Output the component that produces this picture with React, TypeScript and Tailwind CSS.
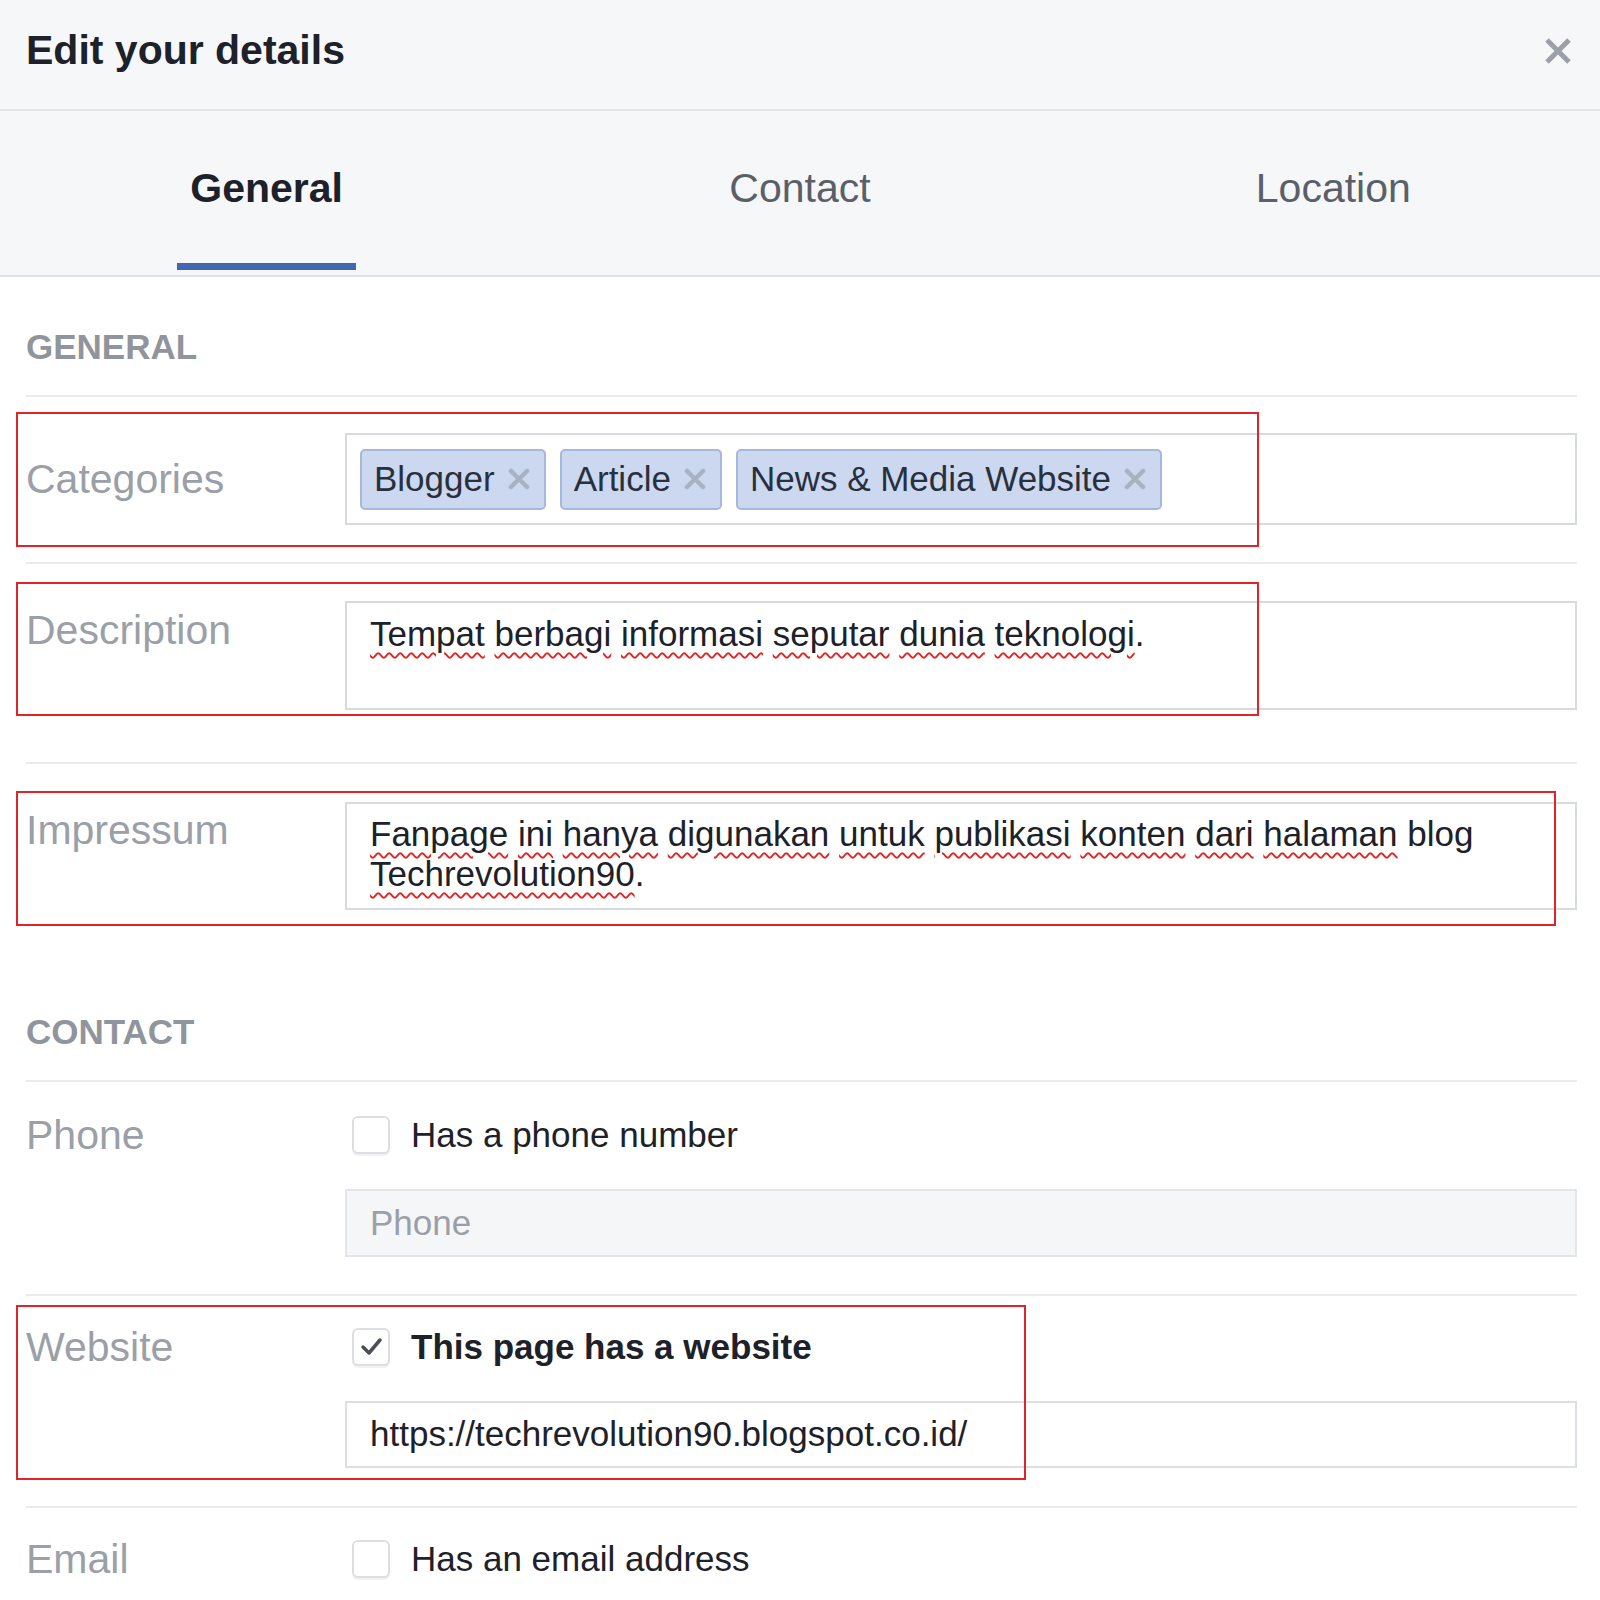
import React from 'react'

const Word = ({ text, bad }: { text: string; bad?: boolean }) =>
  bad ? (
    <span className="underline decoration-wavy decoration-[#e02424] decoration-[1.5px] underline-offset-[6px]">
      {text}
    </span>
  ) : (
    <span>{text}</span>
  )

const Words = ({ items }: { items: [string, boolean][] }) => (
  <>
    {items.map(([w, bad], i) => (
      <React.Fragment key={i}>
        <Word text={w} bad={bad} />
        {i < items.length - 1 ? ' ' : ''}
      </React.Fragment>
    ))}
  </>
)

const Chip = ({ label }: { label: string }) => (
  <div className="flex h-[61px] items-center gap-[13px] rounded-[5px] border-2 border-[#a6b9dc] bg-[#cbd8f0] pl-[12px] pr-[14px] text-[35px] text-[#29303d]">
    <span>{label}</span>
    <svg width="22" height="22" viewBox="0 0 22 22">
      <path d="M3 3 L19 19 M19 3 L3 19" stroke="#a9b2c2" strokeWidth="4.5" strokeLinecap="round" />
    </svg>
  </div>
)

const Checkbox = ({ checked }: { checked?: boolean }) => (
  <div className="ml-[7px] flex h-[38px] w-[38px] items-center justify-center rounded-[6px] border-2 border-[#dcdee3] bg-white shadow-[0_2px_0_rgba(0,0,0,0.05)]">
    {checked && (
      <svg width="26" height="26" viewBox="0 0 26 26">
        <path d="M5 13 L11 19 L22 6" fill="none" stroke="#4b4f56" strokeWidth="3.5" strokeLinecap="round" strokeLinejoin="round" />
      </svg>
    )}
  </div>
)

const RedBox = ({ className }: { className: string }) => (
  <div className={`pointer-events-none absolute border-2 border-[#e0242a] ${className}`} />
)

const Label = ({ text, className }: { text: string; className?: string }) => (
  <div className={`w-[319px] shrink-0 text-[41px] leading-[48px] text-[#9a9fa8] ${className ?? ''}`}>{text}</div>
)

export default function App() {
  return (
    <div className="h-[1600px] w-[1600px] overflow-hidden bg-white font-['Liberation_Sans',Arial,sans-serif]">
      {/* header */}
      <div className="flex h-[111px] items-center justify-between border-b-2 border-[#e3e4e8] bg-[#f6f7f9] pl-[26px] pr-[27px]">
        <h1 className="mb-[8px] text-[41px] font-bold leading-none text-[#1d2129]">Edit your details</h1>
        <svg width="30" height="30" viewBox="0 0 30 30" className="mb-[8px]">
          <path d="M4 4 L26 26 M26 4 L4 26" stroke="#9a9fa8" strokeWidth="5" />
        </svg>
      </div>

      {/* tabs */}
      <div className="flex h-[166px] border-b-2 border-[#dfe1e5] bg-[#f6f7f9]">
        {['General', 'Contact', 'Location'].map((t, i) => (
          <div key={t} className="flex flex-1 flex-col items-center pt-[57px]">
            <div className={`text-[41px] leading-none ${i === 0 ? 'font-bold text-[#1d2129]' : 'text-[#5a5f68]'}`}>{t}</div>
            {i === 0 && <div className="mb-[5px] mt-auto h-[7px] w-[179px] bg-[#4267b2]" />}
          </div>
        ))}
      </div>

      {/* body */}
      <div className="pl-[26px] pr-[23px]">
        <div className="border-b-2 border-[#e9ebee] pb-[31px] pt-[52px] text-[35px] font-bold leading-none text-[#90949c]">GENERAL</div>

        {/* categories */}
        <div className="relative flex items-center border-b-2 border-[#e9ebee] pb-[37px] pt-[36px]">
          <Label text="Categories" />
          <div className="flex h-[92px] flex-1 items-center gap-[14px] border-2 border-[#d7dade] pl-[13px]">
            <Chip label="Blogger" />
            <Chip label="Article" />
            <Chip label="News & Media Website" />
          </div>
          <RedBox className="left-[-10px] top-[15px] h-[135px] w-[1243px]" />
        </div>

        {/* description */}
        <div className="relative flex items-start border-b-2 border-[#e9ebee] pb-[52px] pt-[37px]">
          <Label text="Description" className="pt-[5px]" />
          <div className="h-[109px] flex-1 border-2 border-[#d7dade] pl-[23px] pt-[10px] text-[35px] leading-[41px] text-[#1d2129]">
            <Words
              items={[
                ['Tempat', true],
                ['berbagi', true],
                ['informasi', true],
                ['seputar', true],
                ['dunia', true],
                ['teknologi', true],
              ]}
            />
            .
          </div>
          <RedBox className="left-[-10px] top-[18px] h-[134px] w-[1243px]" />
        </div>

        {/* impressum */}
        <div className="relative flex items-start pb-[52px] pt-[38px]">
          <Label text="Impressum" className="pt-[4px]" />
          <div className="h-[108px] flex-1 border-2 border-[#d7dade] pl-[23px] pt-[10px] text-[35px] leading-[40px] text-[#1d2129]">
            <Words
              items={[
                ['Fanpage', true],
                ['ini', true],
                ['hanya', true],
                ['digunakan', true],
                ['untuk', true],
                ['publikasi', true],
                ['konten', true],
                ['dari', true],
                ['halaman', true],
                ['blog', false],
              ]}
            />
            <br />
            <Word text="Techrevolution90" bad />.
          </div>
          <RedBox className="left-[-10px] top-[27px] h-[135px] w-[1540px]" />
        </div>

        <div className="border-b-2 border-[#e9ebee] pb-[31px] pt-[52px] text-[35px] font-bold leading-none text-[#90949c]">CONTACT</div>

        {/* phone */}
        <div className="flex items-start border-b-2 border-[#e9ebee] pb-[37px] pt-[34px]">
          <Label text="Phone" className="mt-[-5px]" />
          <div className="flex flex-1 flex-col gap-[35px]">
            <div className="flex h-[38px] items-center gap-[21px] text-[35px] text-[#1d2129]">
              <Checkbox />
              <span>Has a phone number</span>
            </div>
            <div className="flex h-[68px] items-center border-2 border-[#e3e5e9] bg-[#f5f6f7] pl-[23px] text-[35px] text-[#9a9fa8]">Phone</div>
          </div>
        </div>

        {/* website */}
        <div className="relative flex items-start border-b-2 border-[#e9ebee] pb-[38px] pt-[32px]">
          <Label text="Website" className="mt-[-5px]" />
          <div className="flex flex-1 flex-col gap-[35px]">
            <div className="flex h-[38px] items-center gap-[21px] text-[35px] font-bold text-[#1d2129]">
              <Checkbox checked />
              <span>This page has a website</span>
            </div>
            <div className="flex h-[67px] items-center border-2 border-[#dcdfe3] pl-[23px] text-[35px] text-[#1d2129]">
              https://techrevolution90.blogspot.co.id/
            </div>
          </div>
          <RedBox className="left-[-10px] top-[9px] h-[175px] w-[1010px]" />
        </div>

        {/* email */}
        <div className="flex items-start pt-[32px]">
          <Label text="Email" className="mt-[-5px]" />
          <div className="flex h-[38px] items-center gap-[21px] text-[35px] text-[#1d2129]">
            <Checkbox />
            <span>Has an email address</span>
          </div>
        </div>
      </div>
    </div>
  )
}
